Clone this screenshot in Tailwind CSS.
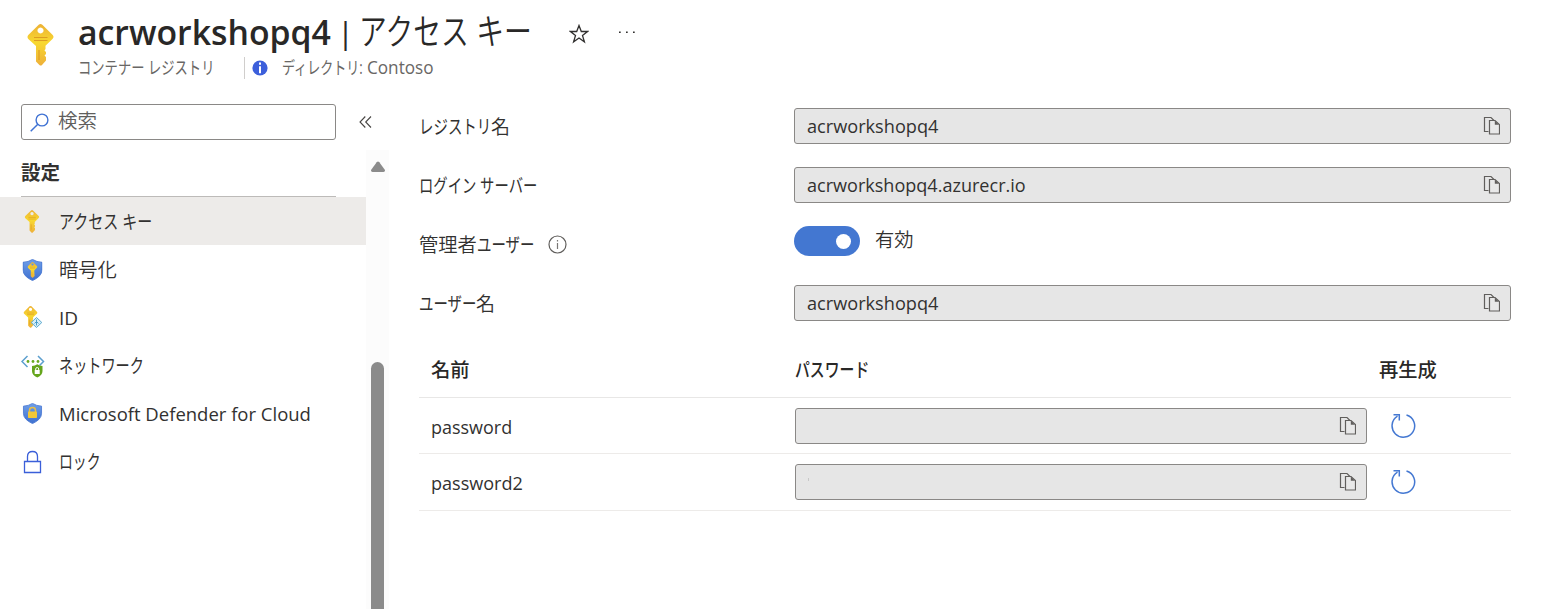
<!DOCTYPE html>
<html lang="ja">
<head>
<meta charset="utf-8">
<title>acrworkshopq4 | アクセス キー</title>
<script src="https://cdn.jsdelivr.net/npm/@tailwindcss/browser@4"></script>
</head>
<body class="w-[1563px] h-[609px] overflow-hidden bg-white text-[#323130] font-['Open_Sans','Noto_Sans_CJK_JP',sans-serif] text-[19px] whitespace-nowrap">
<svg class="absolute h-0 w-0">
  <defs>
    <linearGradient id="gold" x1="0" y1="0" x2="0" y2="1"><stop offset="0" stop-color="#edb136"/><stop offset=".45" stop-color="#f8d82f"/><stop offset="1" stop-color="#eeb03a"/></linearGradient>
    <linearGradient id="blue" x1="0" y1="0" x2="0" y2="1"><stop offset="0" stop-color="#6f9fe8"/><stop offset="1" stop-color="#3e70d0"/></linearGradient>
    <symbol id="key" viewBox="0 0 26 42">
      <path fill="url(#gold)" fill-rule="evenodd" d="M11.2.7q1.8-1.400 3.600 0L25.200 11q1.600 1.800 0 3.700L18 21.700V25l-1 1.500L18.500 28v2l-1.500 1.500L18.500 33v3.500L14.500 41q-1.300 1-2.600 0L8.500 37.500V22L.8 15q-1.600-1.900 0-4zM13 3.500a3 3 0 1 0 .01 0z"/>
      <path d="M6.500 13.500h13.500M6.500 16.500h13.500M11.500 26v10" stroke="#dd9c22" stroke-width="1.100"/>
    </symbol>
    <symbol id="shield" viewBox="0 0 20 22">
      <path d="M.5 3.300Q6 3 10 .4q4 2.600 9.500 2.900v7.500q0 6.500-9.500 10.800Q.5 17.300.5 10.800z" fill="url(#blue)" stroke="#3c6fce" stroke-width=".8"/>
    </symbol>
    <symbol id="copy" viewBox="0 0 17 19">
      <path d="M5.500 15.500H1.500V1.500H8l4 4" fill="none" stroke="#605e5c" stroke-width="1.200"/>
      <path d="M6.500 4.500H12l4.500 4v9.500H6.500z" fill="#e8e8e8" stroke="#605e5c" stroke-width="1.200"/><path d="M11.800 4.500v4.200H16z" fill="#605e5c"/>
    </symbol>
    <symbol id="regen" viewBox="0 0 26 26">
      <path d="M7.500 3.200A11.300 11.300 0 1 0 16.500 2M3.500 1.800H9.300v5.600" fill="none" stroke="#4478d2" stroke-width="1.500"/>
    </symbol>
  </defs>
</svg>

<header class="flex h-[95px] pl-[27px]">
  <svg class="mt-[24px] h-[42px] w-[27px]"><use href="#key"/></svg>
  <div class="ml-6 pt-3">
    <div class="flex h-[40px] items-center">
      <h1 class="flex w-[491px] items-center text-[#292827]">
        <span class="w-[259px] shrink-0"><span class="inline-block origin-left scale-x-[.965] text-[35px] leading-[40px] font-semibold">acrworkshopq4</span></span>
        <span class="w-[22px] shrink-0 text-[31px] leading-[38px]">|</span>
        <span class="inline-block origin-left scale-x-[.773] text-[36px] leading-[38px] font-[350]">アクセス キー</span>
      </h1>
      <svg class="mt-[4px] h-[20px] w-[20px]" viewBox="0 0 20 20"><path d="M10 1.500l2.300 6h6.200l-5 3.900 1.900 6.400L10 14l-5.400 3.800 1.900-6.400-5-3.900h6.200z" fill="none" stroke="#323130" stroke-width="1.300"/></svg>
      <svg class="mt-[1px] ml-[29px] h-[4px] w-[18px]" viewBox="0 0 18 4"><path d="M1 1.200h1.700M8 1.200h1.700M15 1.200h1.700" stroke="#323130" stroke-width="1.500"/></svg>
    </div>
    <div class="mt-[3px] flex h-[26px] items-center text-[17.500px] leading-[24px] text-[#696765]">
      <span class="-mt-[2px] w-[166px]"><span class="inline-block origin-left scale-x-[.76]">コンテナー レジストリ</span></span>
      <span class="h-[22px] w-px bg-[#d0cecc]"></span>
      <svg class="ml-[7px] h-[16px] w-[16px]" viewBox="0 0 16 16"><circle cx="8" cy="8" r="7.600" fill="#3c5fdb"/><path d="M8 2.600v2.200M8 6.200v7" stroke="#fff" stroke-width="2"/></svg>
      <span class="-mt-[2px] ml-[14px] inline-block w-[85px]"><span class="inline-block origin-left scale-x-[.745]">ディレクトリ:</span></span>
      <span class="-mt-[2px] inline-block origin-left scale-x-[.98]">Contoso</span>
    </div>
  </div>
</header>

<div class="flex h-[514px]">
  <nav class="w-[366px] pt-[9px]">
    <div class="flex items-center pl-[21px]">
      <div class="flex h-[36px] w-[315px] shrink-0 items-center rounded-[3px] border border-[#8a8886] pl-[8px]">
        <svg class="h-[19px] w-[19px]" viewBox="0 0 19 19"><circle cx="12" cy="7" r="5.900" fill="none" stroke="#3f72d4" stroke-width="1.400"/><path d="M7.800 11.200L.7 18.300" stroke="#3f72d4" stroke-width="1.500"/></svg>
        <span class="ml-[9px] -mt-[3px] leading-[30px] text-[#605e5c] font-[350] text-[19.500px]">検索</span>
      </div>
      <svg class="ml-[23px] h-[12px] w-[13px] shrink-0" viewBox="0 0 13 12"><path d="M6.300.5L1 6l5.300 5.500M12 .5L6.700 6l5.300 5.500" fill="none" stroke="#484644" stroke-width="1.100"/></svg>
    </div>
    <h2 class="ml-[21px] mt-[14px] h-[43px] w-[315px] border-b border-[#bdbbb9] text-[19.500px] leading-[38px] font-bold">設定</h2>
    <ul class="leading-[48px]">
      <li class="flex h-[48px] items-center bg-[#edebe9] pl-[21px]">
        <svg class="mt-px ml-[3px] mr-[19px] h-[23px] w-[16px]"><use href="#key"/></svg>
        <span class="mt-[2px] inline-block origin-left scale-x-[.79]">アクセス キー</span>
      </li>
      <li class="flex h-[48px] items-center pl-[21px]">
        <svg class="mt-[2px] mr-[16px] h-[24px] w-[22px]" viewBox="0 0 22 24"><use href="#shield" x="1.500" y="1" width="20" height="22"/><use href="#key" x="6.500" y="4" width="10" height="16"/></svg>
        <span class="mt-[2px] text-[19.300px] font-[350]">暗号化</span>
      </li>
      <li class="flex h-[48px] items-center pl-[21px]">
        <svg class="mr-[16px] h-[24px] w-[22px]" viewBox="0 0 22 24"><use href="#key" x="2" y="1" width="15" height="22"/><path d="M15.500 12.500l5.300 5-5.300 5-5.300-5z" fill="#d4edf7" stroke="#5eaad0"/><path d="M15.500 14.500v6M13.500 18.500l2-2 2 2" fill="none" stroke="#4b9cc9"/></svg>
        <span class="mt-px">ID</span>
      </li>
      <li class="flex h-[48px] items-center pl-[21px]">
        <svg class="mt-px mr-[14px] h-[24px] w-[24px]" viewBox="0 0 24 24"><path d="M6.500 2L1 7.500l5.500 5.500M17 2l5.500 5.500L18.500 11.500" fill="none" stroke="#5c9fce" stroke-width="1.500"/><circle cx="7" cy="7.500" r="1.400" fill="#6aaa22"/><circle cx="12" cy="7.500" r="1.400" fill="#6aaa22"/><circle cx="17" cy="7.500" r="1.400" fill="#6aaa22"/><path d="M11 12q3-.2 5.300-1.700 2.200 1.500 5.200 1.700v5q0 4-5.200 6.500Q11 21 11 17z" fill="#65a51c"/><path d="M13.700 16h5v4h-5z" fill="#fff"/><path d="M14.700 16v-1q0-1.500 1.500-1.500t1.500 1.500v1" fill="none" stroke="#fff"/></svg>
        <span class="mt-[2px] inline-block origin-left scale-x-[.745]">ネットワーク</span>
      </li>
      <li class="flex h-[48px] items-center pl-[21px]">
        <svg class="mt-[2px] mr-[16px] h-[24px] w-[22px]" viewBox="0 0 22 24"><use href="#shield" x="1.500" y="1" width="20" height="21"/><path d="M8.500 10V8.200Q8.500 5.500 11.500 5.500t3 2.700V10" fill="none" stroke="#e9bf48" stroke-width="1.500"/><rect x="7" y="9.500" width="9" height="6.500" rx=".7" fill="#f4c837"/></svg>
        <span class="mt-[2px] inline-block origin-left scale-x-[.973]">Microsoft Defender for Cloud</span>
      </li>
      <li class="flex h-[48px] items-center pl-[21px]">
        <svg class="mt-[2px] mr-[16px] h-[24px] w-[22px]" viewBox="0 0 22 24"><path d="M3.500 11.500h16v11h-16zM6.500 11.500V6.500Q6.500 1.500 11.500 1.500t5 5v5" fill="none" stroke="#3b5fd9" stroke-width="1.300"/></svg>
        <span class="mt-[2px] inline-block origin-left scale-x-[.73]">ロック</span>
      </li>
    </ul>
  </nav>

  <div class="mt-[55px] flex w-[23px] flex-col items-center bg-[#fcfcfc]">
    <svg class="mt-[11px] h-[12px] w-[16px]" viewBox="0 0 16 12"><path d="M6.700 1.300q1.300-1.400 2.600 0l5.500 7.500q.8 2-1.300 2.200h-11q-2.100-.2-1.300-2.200z" fill="#8b8b8b"/></svg>
    <div class="mt-[189px] w-[13px] grow rounded-t-full bg-[#8b8b8b]"></div>
  </div>

  <main class="ml-[30px] w-[1092px] pt-[13px]">
    <div class="flex h-[59px]">
      <div class="w-[375px] pt-px leading-[36px]"><span class="inline-block origin-left scale-x-[.76]">レジストリ</span><span class="-ml-[23px] font-[350]">名</span></div>
      <div class="flex h-[36px] w-[717px] items-center justify-between rounded-[3px] border border-[#8a8886] bg-[#e6e6e6] pl-[12px] pr-[10px]"><span class="inline-block origin-left scale-x-[.955]">acrworkshopq4</span><svg class="-mt-px h-[19px] w-[17px]"><use href="#copy"/></svg></div>
    </div>
    <div class="flex h-[59px]">
      <div class="w-[375px] pt-px leading-[36px]"><span class="inline-block origin-left scale-x-[.755]">ログイン サーバー</span></div>
      <div class="flex h-[36px] w-[717px] items-center justify-between rounded-[3px] border border-[#8a8886] bg-[#e6e6e6] pl-[12px] pr-[10px]"><span class="inline-block origin-left scale-x-[.95]">acrworkshopq4.azurecr.io</span><svg class="-mt-px h-[19px] w-[17px]"><use href="#copy"/></svg></div>
    </div>
    <div class="flex h-[59px]">
      <div class="flex w-[375px] pt-px leading-[36px]"><span class="text-[19.300px] font-[350]">管理者</span><span class="inline-block w-[71px]"><span class="inline-block origin-left scale-x-[.76]">ユーザー</span></span>
        <svg class="mt-[8px] h-[19px] w-[19px]" viewBox="0 0 19 19"><circle cx="9.500" cy="9.500" r="8.500" fill="none" stroke="#605e5c" stroke-width="1.200"/><path d="M9.500 5v1.500M9.500 8v6" stroke="#797775" stroke-width="1.200"/></svg></div>
      <div class="flex h-[30px] w-[66px] items-center justify-end rounded-full bg-[#4377d1] pr-[9px]"><span class="mt-px h-[15px] w-[15px] rounded-full bg-white"></span></div>
      <span class="ml-[15px] pt-px text-[19.300px] leading-[26px] font-[350]">有効</span>
    </div>
    <div class="flex h-[59px]">
      <div class="flex w-[375px] pt-px leading-[36px]"><span class="inline-block w-[57px]"><span class="inline-block origin-left scale-x-[.76]">ユーザー</span></span><span class="font-[350]">名</span></div>
      <div class="flex h-[36px] w-[717px] items-center justify-between rounded-[3px] border border-[#8a8886] bg-[#e6e6e6] pl-[12px] pr-[10px]"><span class="inline-block origin-left scale-x-[.955]">acrworkshopq4</span><svg class="-mt-px h-[19px] w-[17px]"><use href="#copy"/></svg></div>
    </div>
    <div class="flex h-[54px] border-b border-[#e8e7e6] pt-px pl-[12px] text-[19.300px] leading-[50px] font-medium text-[#292827]">
      <span class="w-[364px]">名前</span>
      <span class="w-[584px]"><span class="inline-block origin-left scale-x-[.77]">パスワード</span></span>
      <span>再生成</span>
    </div>
    <div class="flex h-[56px] items-center border-b border-[#edebe9] pl-[12px]">
      <span class="w-[364px] pt-[3px]"><span class="inline-block origin-left scale-x-[.945]">password</span></span>
      <div class="flex h-[36px] w-[572px] items-center justify-end rounded-[3px] border border-[#8a8886] bg-[#e6e6e6] pr-[10px]"><svg class="-mt-px h-[19px] w-[17px]"><use href="#copy"/></svg></div>
      <svg class="ml-[22.500px] h-[26px] w-[26px]"><use href="#regen"/></svg>
    </div>
    <div class="flex h-[57px] items-center border-b border-[#edebe9] pl-[12px]">
      <span class="w-[364px] pt-[2px]"><span class="inline-block origin-left scale-x-[.95]">password2</span></span>
      <div class="flex h-[36px] w-[572px] items-center justify-between rounded-[3px] border border-[#8a8886] bg-[#e6e6e6] pl-[12px] pr-[10px]"><i class="-mt-[5px] h-[3px] w-px bg-[#c8c8c8]"></i><svg class="-mt-px h-[19px] w-[17px]"><use href="#copy"/></svg></div>
      <svg class="ml-[22.500px] h-[26px] w-[26px]"><use href="#regen"/></svg>
    </div>
  </main>
</div>
</body>
</html>
